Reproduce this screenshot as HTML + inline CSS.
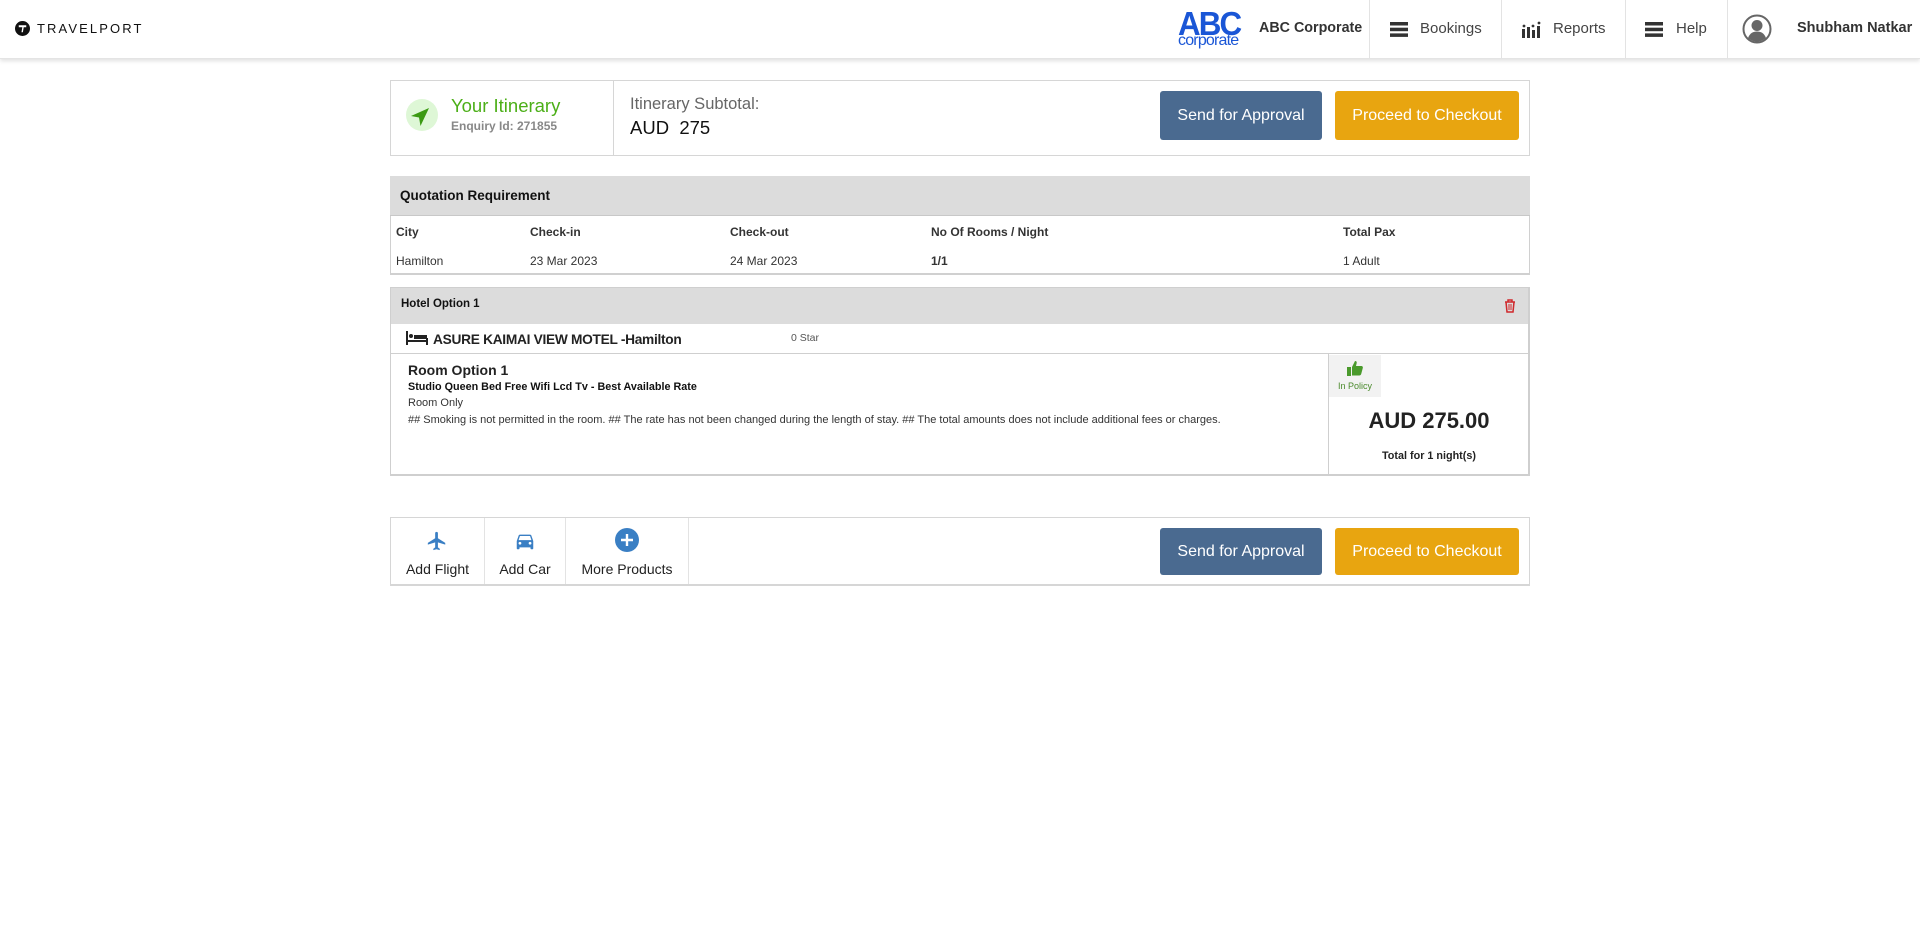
<!DOCTYPE html>
<html><head><meta charset="utf-8"><style>
*{box-sizing:border-box;margin:0;padding:0}
body{width:1920px;height:934px;background:#fff;font-family:"Liberation Sans",Arial,sans-serif;color:#222;position:relative;overflow:hidden}
.a{position:absolute;white-space:nowrap}
.nav{position:absolute;left:0;top:0;width:1920px;height:59px;background:#fff;box-shadow:0 2px 4px rgba(0,0,0,.12);border-bottom:1px solid #e4e4e4}
.vd{position:absolute;top:0;width:1px;height:59px;background:#e3e3e3}
.btn{position:absolute;color:#fff;font-size:16px;border-radius:3px;display:flex;align-items:center;justify-content:center}
.blue{background:#4a6a90}.org{background:#e8a510}
.box{position:absolute;border:1px solid #d6d6d6;background:#fff}
.s{font-size:12px;color:#333}
.b{font-weight:bold}
</style></head><body>
<div class="nav">
  <svg class="a" style="left:15px;top:21px" width="15" height="15" viewBox="0 0 16 16"><circle cx="8" cy="8" r="8" fill="#111"/><path d="M4 4.5h8v2.2H9.3L8.4 12H6.9l.9-5.3H4z" fill="#fff"/></svg>
  <div class="a" style="left:37px;top:21px;font-size:13px;letter-spacing:2.1px;color:#111">TRAVELPORT</div>
  <div class="a" style="left:1178px;top:7px;font-size:33px;font-weight:bold;color:#1a56d6;letter-spacing:-2px;line-height:33px;transform:scaleX(0.95);transform-origin:left">ABC</div>
  <div class="a" style="left:1178px;top:33px;font-size:16px;color:#1a56d6;letter-spacing:-0.8px;line-height:16px">corporate</div>
  <div class="a b" style="left:1259px;top:20px;font-size:14.3px;color:#333">ABC Corporate</div>
  <div class="vd" style="left:1369px"></div>
  <div class="vd" style="left:1501px"></div>
  <div class="vd" style="left:1625px"></div>
  <div class="vd" style="left:1727px"></div>
  <svg class="a" style="left:1390px;top:22px" width="18" height="15"><rect y="0" width="18" height="3.5" fill="#333"/><rect y="5.7" width="18" height="3.5" fill="#333"/><rect y="11.4" width="18" height="3.5" fill="#333"/></svg>
  <div class="a" style="left:1420px;top:20px;font-size:15px;color:#444">Bookings</div>
  <svg class="a" style="left:1522px;top:21px" width="20" height="17"><rect x="0" y="8" width="3" height="9" fill="#333"/><rect x="5" y="6" width="3" height="11" fill="#333"/><rect x="10" y="9" width="3" height="8" fill="#333"/><rect x="15" y="5" width="3" height="12" fill="#333"/><circle cx="2" cy="5" r="1.4" fill="#333"/><circle cx="11" cy="5" r="1.4" fill="#333"/><circle cx="17" cy="2" r="1.4" fill="#333"/></svg>
  <div class="a" style="left:1553px;top:20px;font-size:15px;color:#444">Reports</div>
  <svg class="a" style="left:1645px;top:22px" width="18" height="15"><rect y="0" width="18" height="3.5" fill="#333"/><rect y="5.7" width="18" height="3.5" fill="#333"/><rect y="11.4" width="18" height="3.5" fill="#333"/></svg>
  <div class="a" style="left:1676px;top:20px;font-size:15px;color:#444">Help</div>
  <svg class="a" style="left:1742px;top:14px" width="30" height="30" viewBox="0 0 30 30"><circle cx="15" cy="15" r="13.5" fill="#fff" stroke="#666" stroke-width="2"/><circle cx="15" cy="11.5" r="5.5" fill="#666"/><path d="M6 24c2-5 5-6.5 9-6.5s7 1.5 9 6.5a13 13 0 0 1-18 0z" fill="#666"/></svg>
  <div class="a b" style="left:1797px;top:20px;font-size:14.5px;color:#333">Shubham Natkar</div>
</div>

<div class="box" style="left:390px;top:80px;width:1140px;height:76px"></div>
<div class="a" style="left:613px;top:81px;width:1px;height:74px;background:#d6d6d6"></div>
<div class="a" style="left:406px;top:99px;width:32px;height:32px;border-radius:50%;background:#def7d6"></div>
<svg class="a" style="left:409px;top:105px" width="22" height="22" viewBox="0 0 22 22"><path d="M20 3L2 11l8 1.5 1.5 8.5z" fill="#3b9a12"/></svg>
<div class="a" style="left:451px;top:95px;font-size:18.5px;color:#4caf18">Your Itinerary</div>
<div class="a b" style="left:451px;top:119px;font-size:12px;color:#888">Enquiry Id: 271855</div>
<div class="a" style="left:630px;top:95px;font-size:16.5px;color:#666">Itinerary Subtotal:</div>
<div class="a" style="left:630px;top:117px;font-size:18.5px;color:#111">AUD&nbsp; 275</div>
<div class="btn blue" style="left:1160px;top:91px;width:162px;height:49px">Send for Approval</div>
<div class="btn org" style="left:1335px;top:91px;width:184px;height:49px">Proceed to Checkout</div>

<div class="box" style="left:390px;top:176px;width:1140px;height:99px;border-color:#d0d0d0;border-bottom-width:2px"></div>
<div class="a" style="left:390px;top:176px;width:1140px;height:40px;background:#dcdcdc;border-bottom:1px solid #c8c8c8"></div>
<div class="a b" style="left:400px;top:188px;font-size:13.5px;color:#111">Quotation Requirement</div>
<div class="a b s" style="left:396px;top:225px">City</div>
<div class="a b s" style="left:530px;top:225px">Check-in</div>
<div class="a b s" style="left:730px;top:225px">Check-out</div>
<div class="a b s" style="left:931px;top:225px">No Of Rooms / Night</div>
<div class="a b s" style="left:1343px;top:225px">Total Pax</div>
<div class="a s" style="left:396px;top:254px">Hamilton</div>
<div class="a s" style="left:530px;top:254px">23 Mar 2023</div>
<div class="a s" style="left:730px;top:254px">24 Mar 2023</div>
<div class="a s b" style="left:931px;top:254px">1/1</div>
<div class="a s" style="left:1343px;top:254px">1 Adult</div>

<div class="box" style="left:390px;top:287px;width:1140px;height:189px;border-color:#cfcfcf;border-width:1px 2px 2px 1px"></div>
<div class="a" style="left:391px;top:288px;width:1137px;height:36px;background:#dcdcdc"></div>
<div class="a b" style="left:401px;top:298px;font-size:11.5px;color:#111">Hotel Option 1</div>
<svg class="a" style="left:1504px;top:299px" width="12" height="14" viewBox="0 0 12 14"><path d="M1 3h10M4 3V1h4v2M2 3l1 10h6l1-10" fill="none" stroke="#d0282c" stroke-width="1.5"/><path d="M5 5v6M7 5v6" stroke="#d0282c"/></svg>
<div class="a" style="left:391px;top:353px;width:1137px;height:1px;background:#cfcfcf"></div>
<svg class="a" style="left:406px;top:331px" width="22" height="14" viewBox="0 0 22 14"><rect x="0" y="0" width="2" height="14" fill="#222"/><rect x="0" y="9" width="22" height="2" fill="#222"/><rect x="20" y="7" width="2" height="7" fill="#222"/><circle cx="5" cy="5" r="2" fill="#222"/><rect x="8" y="4" width="13" height="4" fill="#222"/></svg>
<div class="a b" style="left:433px;top:331px;font-size:14px;color:#222;letter-spacing:-0.3px;transform:scaleX(0.98);transform-origin:left">ASURE KAIMAI VIEW MOTEL -Hamilton</div>
<div class="a" style="left:791px;top:332px;font-size:10.5px;color:#555">0 Star</div>
<div class="a" style="left:1328px;top:354px;width:1px;height:120px;background:#cfcfcf"></div>
<div class="a b" style="left:408px;top:362px;font-size:14px;color:#222">Room Option 1</div>
<div class="a b" style="left:408px;top:381px;font-size:10.8px;color:#111">Studio Queen Bed Free Wifi Lcd Tv - Best Available Rate</div>
<div class="a" style="left:408px;top:397px;font-size:11px;color:#333">Room Only</div>
<div class="a" style="left:408px;top:414px;font-size:11px;color:#333">## Smoking is not permitted in the room. ## The rate has not been changed during the length of stay. ## The total amounts does not include additional fees or charges.</div>
<div class="a" style="left:1329px;top:355px;width:52px;height:42px;background:#f2f2f2"></div>
<svg class="a" style="left:1347px;top:361px" width="16" height="15" viewBox="0 0 16 15"><path d="M5 6l3-6c1.5 0 2 1 1.6 2.5L9 5h5.5c1 0 1.6 1 1.3 2l-1.6 6c-.3 1-1 1.5-2 1.5H5z" fill="#4a9a2c"/><rect x="0" y="6" width="4" height="9" fill="#4a9a2c"/></svg>
<div class="a" style="left:1329px;top:381px;width:52px;text-align:center;font-size:9px;color:#4a8a2c">In Policy</div>
<div class="a b" style="left:1330px;top:408px;width:198px;text-align:center;font-size:22px;color:#222">AUD 275.00</div>
<div class="a b" style="left:1330px;top:450px;width:198px;text-align:center;font-size:10.8px;color:#222">Total for 1 night(s)</div>

<div class="box" style="left:390px;top:517px;width:1140px;height:69px;border-bottom:2px solid #d6d6d6"></div>
<div class="a" style="left:484px;top:518px;width:1px;height:66px;background:#e3e3e3"></div>
<div class="a" style="left:565px;top:518px;width:1px;height:66px;background:#e3e3e3"></div>
<div class="a" style="left:688px;top:518px;width:1px;height:66px;background:#e3e3e3"></div>
<svg class="a" style="left:426px;top:529px" width="22" height="24" viewBox="0 0 24 24"><path d="M21 16v-2l-8-5V3.5a1.5 1.5 0 0 0-3 0V9l-8 5v2l8-2.5V19l-2 1.5V22l3.5-1 3.5 1v-1.5L13 19v-5.5z" fill="#3a7fc4"/></svg>
<div class="a" style="left:391px;top:561px;width:93px;text-align:center;font-size:14px;color:#222">Add Flight</div>
<svg class="a" style="left:514px;top:530px" width="22" height="22" viewBox="0 0 24 24"><path d="M18.9 6c-.2-.6-.8-1-1.4-1h-11c-.7 0-1.2.4-1.4 1L3 12v8c0 .6.4 1 1 1h1c.6 0 1-.4 1-1v-1h12v1c0 .6.4 1 1 1h1c.6 0 1-.4 1-1v-8zM6.5 16a1.5 1.5 0 1 1 0-3 1.5 1.5 0 0 1 0 3zm11 0a1.5 1.5 0 1 1 0-3 1.5 1.5 0 0 1 0 3zM5 11l1.5-4.5h11L19 11z" fill="#3a7fc4"/></svg>
<div class="a" style="left:485px;top:561px;width:80px;text-align:center;font-size:14px;color:#222">Add Car</div>
<svg class="a" style="left:615px;top:528px" width="24" height="24" viewBox="0 0 24 24"><circle cx="12" cy="12" r="12" fill="#3a7fc4"/><path d="M12 6v12M6 12h12" stroke="#fff" stroke-width="2.4"/></svg>
<div class="a" style="left:566px;top:561px;width:122px;text-align:center;font-size:14px;color:#222">More Products</div>
<div class="btn blue" style="left:1160px;top:528px;width:162px;height:47px">Send for Approval</div>
<div class="btn org" style="left:1335px;top:528px;width:184px;height:47px">Proceed to Checkout</div>
</body></html>
